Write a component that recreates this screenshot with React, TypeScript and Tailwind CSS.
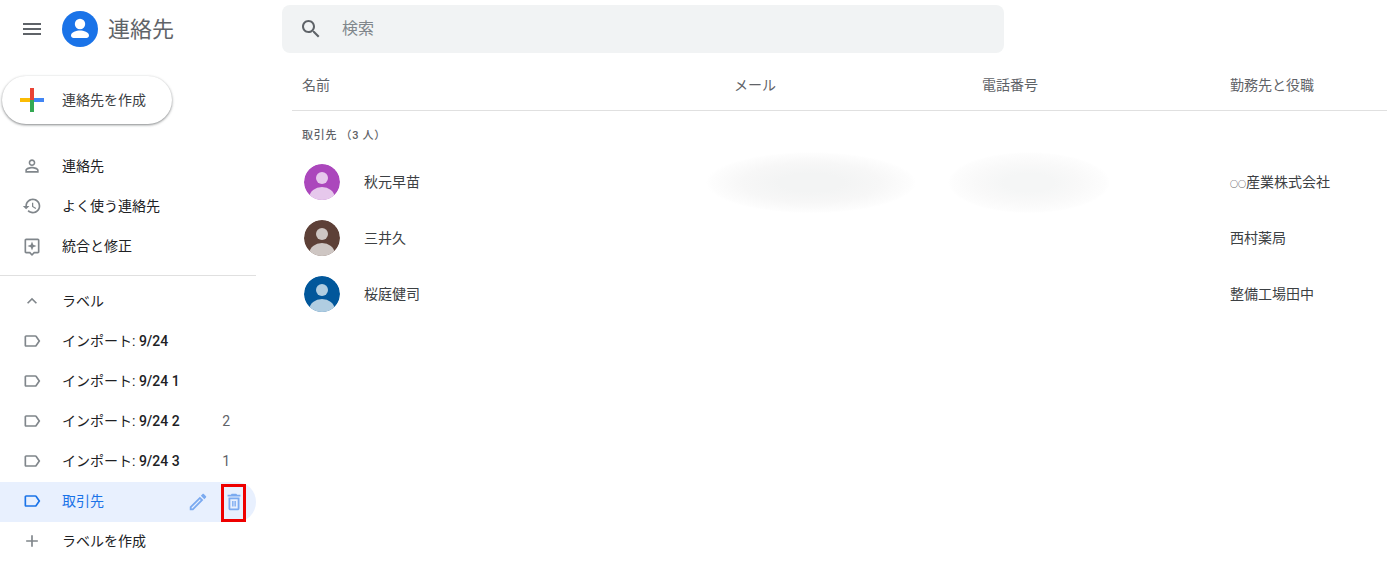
import React from 'react';

const paths = {
  menu: 'M3 18h18v-2H3v2zm0-5h18v-2H3v2zm0-7v2h18V6H3z',
  search:
    'M15.5 14h-.79l-.28-.27C15.41 12.59 16 11.11 16 9.5 16 5.91 13.09 3 9.5 3S3 5.91 3 9.5 5.91 16 9.5 16c1.61 0 3.09-.59 4.23-1.57l.27.28v.79l5 4.99L20.49 19l-4.99-5zm-6 0C7.01 14 5 11.99 5 9.5S7.01 5 9.5 5 14 7.01 14 9.5 11.99 14 9.5 14z',
  person:
    'M12 5.9c1.16 0 2.1.94 2.1 2.1s-.94 2.1-2.1 2.1S9.9 9.16 9.9 8s.94-2.1 2.1-2.1m0 9c2.97 0 6.1 1.46 6.1 2.1v1.1H5.9V17c0-.64 3.13-2.1 6.1-2.1M12 4C9.79 4 8 5.79 8 8s1.79 4 4 4 4-1.79 4-4-1.79-4-4-4zm0 9c-2.67 0-8 1.34-8 4v3h16v-3c0-2.66-5.33-4-8-4z',
  history:
    'M13 3c-4.97 0-9 4.03-9 9H1l3.89 3.89.07.14L9 12H6c0-3.87 3.13-7 7-7s7 3.13 7 7-3.13 7-7 7c-1.93 0-3.68-.79-4.94-2.06l-1.42 1.42C8.27 19.99 10.51 21 13 21c4.97 0 9-4.03 9-9s-4.03-9-9-9zm-1 5v5l4.28 2.54.72-1.21-3.5-2.08V8H12z',
  merge:
    'M19 3H5c-1.1 0-2 .9-2 2v14c0 1.1.9 2 2 2h4l3 3 3-3h4c1.1 0 2-.9 2-2V5c0-1.1-.9-2-2-2zm0 16h-4.83L12 21.17 9.83 19H5V5h14v14zM12 6.5l-1.5 4-4 1.5 4 1.5 1.5 4 1.5-4 4-1.5-4-1.5z',
  chevron: 'M12 8l-6 6 1.41 1.41L12 10.83l4.59 4.58L18 14z',
  label:
    'M17.63 5.84C17.27 5.33 16.67 5 16 5L5 5.01C3.9 5.01 3 5.9 3 7v10c0 1.1.9 1.99 2 1.99L16 19c.67 0 1.27-.33 1.63-.84L22 12l-4.37-6.16zM16 17H5V7h11l3.55 5L16 17z',
  plus: 'M19 13h-6v6h-2v-6H5v-2h6V5h2v6h6v2z',
  edit:
    'M14.06 9.02l.92.92L5.92 19H5v-.92l9.06-9.06M17.66 3c-.25 0-.51.1-.7.29l-1.83 1.83 3.75 3.75 1.83-1.83c.39-.39.39-1.02 0-1.41l-2.34-2.34c-.2-.2-.45-.29-.71-.29zm-3.6 3.19L3 17.25V21h3.75L17.81 9.94l-3.75-3.75z',
  trash:
    'M6 19c0 1.1.9 2 2 2h8c1.1 0 2-.9 2-2V7H6v12zM8 9h8v10H8V9zm7.5-5l-1-1h-5l-1 1H5v2h14V4zM10 11h1.5v6H10zM12.5 11H14v6h-1.5z',
};

const Icon = ({ d, className }: { d: string; className: string }) => (
  <svg viewBox="0 0 24 24" className={className} fill="currentColor">
    <path d={d} />
  </svg>
);

const NavItem = ({
  icon,
  text,
  num,
  count,
}: {
  icon: string;
  text: string;
  num?: string;
  count?: string;
}) => (
  <div className="flex h-10 items-center text-sm text-[#202124]">
    <Icon d={icon} className="mb-[2px] ml-[22px] h-5 w-5 text-[#80868b]" />
    <span className="ml-[20px] flex-1 pb-[2px]">
      {text}
      {num && <span className="font-medium"> {num}</span>}
    </span>
    {count && <span className="mr-[26px] pb-[2px] text-[#5f6368]">{count}</span>}
  </div>
);

const Avatar = ({ bg, fg }: { bg: string; fg: string }) => (
  <svg viewBox="0 0 36 36" className="h-9 w-9 rounded-full">
    <circle cx="18" cy="18" r="18" fill={bg} />
    <circle cx="18" cy="14" r="6" fill={fg} />
    <ellipse cx="18" cy="33" rx="12.5" ry="10" fill={fg} />
  </svg>
);

const contacts = [
  { name: '秋元早苗', company: '産業株式会社', prefix: '○○', bg: '#ab47bc', fg: '#e6c8ec', blurred: true },
  { name: '三井久', company: '西村薬局', prefix: '', bg: '#5d4037', fg: '#cec6c3', blurred: false },
  { name: '桜庭健司', company: '整備工場田中', prefix: '', bg: '#01579b', fg: '#b0cde1', blurred: false },
];

export default function App() {
  return (
    <div className="relative flex h-[564px] w-[1387px] overflow-hidden bg-white font-['Roboto','Noto_Sans_CJK_JP',sans-serif]">
      <aside className="w-[256px] shrink-0">
        <div className="flex h-[58px] items-center">
          <Icon d={paths.menu} className="ml-[20px] h-6 w-6 text-[#5f6368]" />
          <svg viewBox="0 0 36 36" className="ml-[18px] h-9 w-9">
            <circle cx="18" cy="18" r="18" fill="#1a73e8" />
            <circle cx="18" cy="13" r="5.2" fill="#fff" />
            <path d="M9 24.5c0-3.4 5.4-5 9-5s9 1.6 9 5c0 1.6-1.2 2.5-2.5 2.5h-13C10.200 27 9 26.100 9 24.500z" fill="#fff" />
          </svg>
          <span className="ml-[10px] text-[22px] text-[#5f6368]">連絡先</span>
        </div>

        <div className="ml-[2px] mt-[18px] flex h-12 w-[170px] items-center rounded-full bg-white text-sm text-[#3c4043] shadow-[0_1px_3px_rgba(60,64,67,0.4),0_1px_2px_rgba(60,64,67,0.3)]">
          <svg viewBox="0 0 24 24" className="ml-[18px] h-6 w-6">
            <rect x="10" y="0" width="4" height="12" fill="#ea4335" />
            <rect x="10" y="12" width="4" height="12" fill="#34a853" />
            <rect x="0" y="10" width="10" height="4" fill="#fbbc04" />
            <rect x="14" y="10" width="10" height="4" fill="#4285f4" />
          </svg>
          <span className="ml-[18px] pb-px">連絡先を作成</span>
        </div>

        <nav className="mt-[23px]">
          <NavItem icon={paths.person} text="連絡先" />
          <NavItem icon={paths.history} text="よく使う連絡先" />
          <NavItem icon={paths.merge} text="統合と修正" />
        </nav>

        <div className="mt-2 border-t border-[#e0e0e0]" />

        <div className="mt-[6px]">
          <NavItem icon={paths.chevron} text="ラベル" />
          <NavItem icon={paths.label} text="インポート:" num="9/24" />
          <NavItem icon={paths.label} text="インポート:" num="9/24 1" />
          <NavItem icon={paths.label} text="インポート:" num="9/24 2" count="2" />
          <NavItem icon={paths.label} text="インポート:" num="9/24 3" count="1" />
          <div className="flex h-10 items-center rounded-r-full bg-[#e8f0fe] text-sm text-[#1a73e8]">
            <Icon d={paths.label} className="mb-[2px] ml-[22px] h-5 w-5" />
            <span className="ml-[20px] flex-1 pb-[2px]">取引先</span>
            <Icon d={paths.edit} className="h-[22px] w-[22px] text-[#7baaf0]" />
            <Icon d={paths.trash} className="ml-[14px] mr-[11px] h-[22px] w-[22px] text-[#7baaf0]" />
          </div>
          <NavItem icon={paths.plus} text="ラベルを作成" />
        </div>
      </aside>

      <main className="min-w-0 flex-1">
        <div className="ml-[26px] mt-[5px] flex h-12 w-[722px] items-center rounded-lg bg-[#f1f3f4]">
          <Icon d={paths.search} className="ml-[17px] h-6 w-6 text-[#5f6368]" />
          <span className="ml-[19px] text-base text-[#80868b]">検索</span>
        </div>

        <div className="ml-[36px] mt-[9px]">
          <div className="grid h-[49px] grid-cols-[432px_248px_248px_1fr] items-center border-b border-[#e0e0e0] pb-[2px] pl-[10px] text-sm text-[#5f6368]">
            <span>名前</span>
            <span>メール</span>
            <span>電話番号</span>
            <span>勤務先と役職</span>
          </div>

          <div className="flex h-[43px] items-center pl-[10px] pt-[8px] text-[11px] font-medium tracking-[0.7px] text-[#5f6368]">
            取引先 （3 人）
          </div>

          {contacts.map((c) => (
            <div
              key={c.name}
              className="grid h-14 grid-cols-[432px_248px_248px_1fr] items-center pl-[10px] text-sm text-[#3c4043]"
            >
              <div className="flex items-center">
                <div className="ml-[2px]">
                  <Avatar bg={c.bg} fg={c.fg} />
                </div>
                <span className="ml-[24px]">{c.name}</span>
              </div>
              <div className="relative h-full">
                {c.blurred && (
                  <div className="absolute left-[-28px] top-[-2px] h-[68px] w-[210px] rounded-[14px] bg-[radial-gradient(closest-side_at_50%_45%,#f3f4f4_30%,#f7f7f7_65%,#fdfdfd_95%,#ffffff_100%)]" />
                )}
              </div>
              <div className="relative h-full">
                {c.blurred && (
                  <div className="absolute left-[-34px] top-[-2px] h-[68px] w-[162px] rounded-[14px] bg-[radial-gradient(closest-side_at_50%_45%,#f5f6f6_30%,#f9f9f9_65%,#fdfdfd_95%,#ffffff_100%)]" />
                )}
              </div>
              <span>
                {c.prefix && <span className="text-[8px] font-medium text-[#202124]">{c.prefix}</span>}
                {c.company}
              </span>
            </div>
          ))}
        </div>
      </main>

      <div className="absolute left-[221px] top-[484px] h-[38px] w-[25px] border-[3px] border-[#ee0000]" />
    </div>
  );
}
